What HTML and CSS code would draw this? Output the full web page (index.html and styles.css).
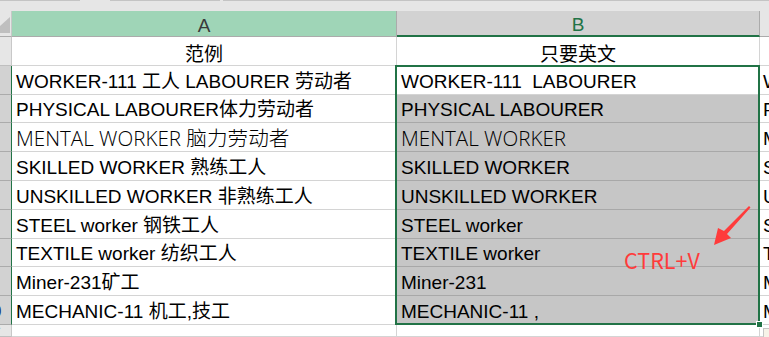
FILE: index.html
```html
<!DOCTYPE html>
<html lang="zh">
<head>
<meta charset="utf-8">
<title>Sheet</title>
<link rel="stylesheet" href="styles.css">
</head>
<body>
<div class="sheet">
  <div class="topbar"><i class="seg s1"></i><i class="gap g1"></i><i class="seg s2"></i><i class="gap g2"></i><i class="seg s3"></i></div>
  <div class="grid">
    <div class="corner"><svg width="12" height="26" viewBox="0 0 12 26"><polygon points="10,6 10,22 0,22 0,15" fill="#bfbfbf"/></svg></div>
    <div class="colhead hA">A</div>
    <div class="colhead hB">B</div>
    <div class="colhead hC"></div>

    <div class="rh"><span>1</span></div>
    <div class="cell center title">范例</div>
    <div class="cell center title">只要英文</div>
    <div class="cell cc"></div>

    <div class="rh sel"><span>2</span></div>
    <div class="cell">WORKER-111 工人 LABOURER 劳动者</div>
    <div class="cell">WORKER-111  LABOURER</div>
    <div class="cell cc">WORKER-111</div>

    <div class="rh sel"><span>3</span></div>
    <div class="cell">PHYSICAL LABOURER体力劳动者</div>
    <div class="cell fill">PHYSICAL LABOURER</div>
    <div class="cell cc">PHYSICAL</div>

    <div class="rh sel"><span>4</span></div>
    <div class="cell light">MENTAL WORKER 脑力劳动者</div>
    <div class="cell fill light">MENTAL WORKER</div>
    <div class="cell cc">MENTAL</div>

    <div class="rh sel"><span>5</span></div>
    <div class="cell">SKILLED WORKER 熟练工人</div>
    <div class="cell fill">SKILLED WORKER</div>
    <div class="cell cc">SKILLED</div>

    <div class="rh sel"><span>6</span></div>
    <div class="cell">UNSKILLED WORKER 非熟练工人</div>
    <div class="cell fill">UNSKILLED WORKER</div>
    <div class="cell cc">UNSKILLED</div>

    <div class="rh sel"><span>7</span></div>
    <div class="cell">STEEL worker 钢铁工人</div>
    <div class="cell fill">STEEL worker</div>
    <div class="cell cc">STEEL</div>

    <div class="rh sel"><span>8</span></div>
    <div class="cell">TEXTILE worker 纺织工人</div>
    <div class="cell fill">TEXTILE worker</div>
    <div class="cell cc">TEXTILE</div>

    <div class="rh sel"><span>9</span></div>
    <div class="cell">Miner-231矿工</div>
    <div class="cell fill">Miner-231</div>
    <div class="cell cc">Miner</div>

    <div class="rh sel"><span>10</span></div>
    <div class="cell">MECHANIC-11 机工,技工</div>
    <div class="cell fill">MECHANIC-11 ,</div>
    <div class="cell cc">MECHANIC</div>

    <div class="rh"><span>11</span></div>
    <div class="cell"></div>
    <div class="cell"></div>
    <div class="cell cc"></div>
  </div>

  <div class="selection"></div>
  <div class="handle"></div>
  <div class="paste"></div>
  <div class="note">CTRL+V</div>
  <svg class="arrow" width="44" height="46" viewBox="0 0 44 46"><polygon points="39,4 14,29 8,26 4,43 21,36 17,32 40.5,5.5" fill="#ff3b3b"/></svg>
</div>
</body>
</html>
```

FILE: styles.css
```css
html, body {
  margin: 0;
  padding: 0;
  background: #ffffff;
}

.sheet {
  position: relative;
  width: 769px;
  height: 337px;
  overflow: hidden;
  background: #ffffff;
}

.topbar {
  height: 11px;
  background: #e6e6e6;
  display: flex;
  align-items: flex-start;
}

.topbar i {
  display: block;
  height: 1px;
}

.topbar .seg { background: #c4c4c4; }
.topbar .s1 { width: 80px; }
.topbar .g1 { width: 30px; }
.topbar .s2 { width: 110px; }
.topbar .g2 { width: 3px; }
.topbar .s3 { flex: 1; }

.grid {
  display: grid;
  grid-template-columns: 12px 385px 363px 9px;
  grid-template-rows: 26px repeat(10, 28.8px) 1fr;
  height: 326px;
}

.corner {
  background: #e6e6e6;
  border-right: 1px solid #c8c8c8;
  border-bottom: 1px solid #ababab;
  box-sizing: border-box;
  overflow: hidden;
}

.corner svg { display: block; }

.colhead {
  box-sizing: border-box;
  display: flex;
  justify-content: center;
  align-items: flex-end;
  font: 19px/21px "Liberation Sans", "Noto Sans CJK SC", sans-serif;
  color: #3a3a3a;
  border-right: 1px solid #ababab;
  border-bottom: 1px solid #ababab;
}

.hA { background: #9fd5b7; }
.hB {
  background: #d2d2d2;
  color: #217346;
  border-bottom: 2px solid #217346;
}
.hC {
  background: #e6e6e6;
  border-right: none;
}

.rh {
  box-sizing: border-box;
  background: #e6e6e6;
  border-right: 1px solid #c8c8c8;
  border-bottom: 1px solid #bfbfbf;
  overflow: hidden;
  display: flex;
  align-items: flex-end;
  font: 17px/21px "Liberation Sans", sans-serif;
  color: #444444;
  padding-bottom: 2px;
}

.rh span {
  flex: none;
  width: 40px;
  margin-left: -28px;
  text-align: center;
}

.rh.sel {
  background: #d2d2d2;
  border-right: 1px solid #217346;
  border-bottom-color: #ababab;
  color: #1f3b70;
}

.cell {
  box-sizing: border-box;
  display: flex;
  align-items: flex-end;
  padding: 0 4px 2px 4px;
  border-right: 1px solid #d4d4d4;
  border-bottom: 1px solid #d4d4d4;
  font: 19px/21px "Liberation Sans", "Noto Sans CJK SC", sans-serif;
  color: #000000;
  white-space: pre;
  overflow: hidden;
}

.cell.center {
  justify-content: center;
}

.cell.title {
  padding-bottom: 0;
}

.cell.fill {
  background: #c6c6c6;
  border-bottom-color: #a8a8a8;
}

.cell.light {
  font-family: "Open Sans", "Noto Sans CJK SC", sans-serif;
  font-weight: 300;
  font-size: 20.6px;
  color: #000000;
}

.cell.cc {
  padding-left: 3px;
  padding-right: 0;
  border-right: none;
}

.selection {
  position: absolute;
  left: 395px;
  top: 65px;
  width: 365px;
  height: 260px;
  box-sizing: border-box;
  border: 2px solid #217346;
}

.handle {
  position: absolute;
  left: 756px;
  top: 321px;
  width: 5px;
  height: 5px;
  background: #217346;
  border: 1px solid #ffffff;
}

.paste {
  position: absolute;
  left: 763px;
  top: 328px;
  width: 12px;
  height: 12px;
  box-sizing: border-box;
  border: 1px solid #c6c6c6;
  background: #f7f3e8;
}

.note {
  position: absolute;
  left: 624px;
  top: 249px;
  font: 21.5px/1 "Noto Sans CJK SC", sans-serif;
  color: #ff3b3b;
}

.arrow {
  position: absolute;
  left: 710px;
  top: 202px;
}
```
